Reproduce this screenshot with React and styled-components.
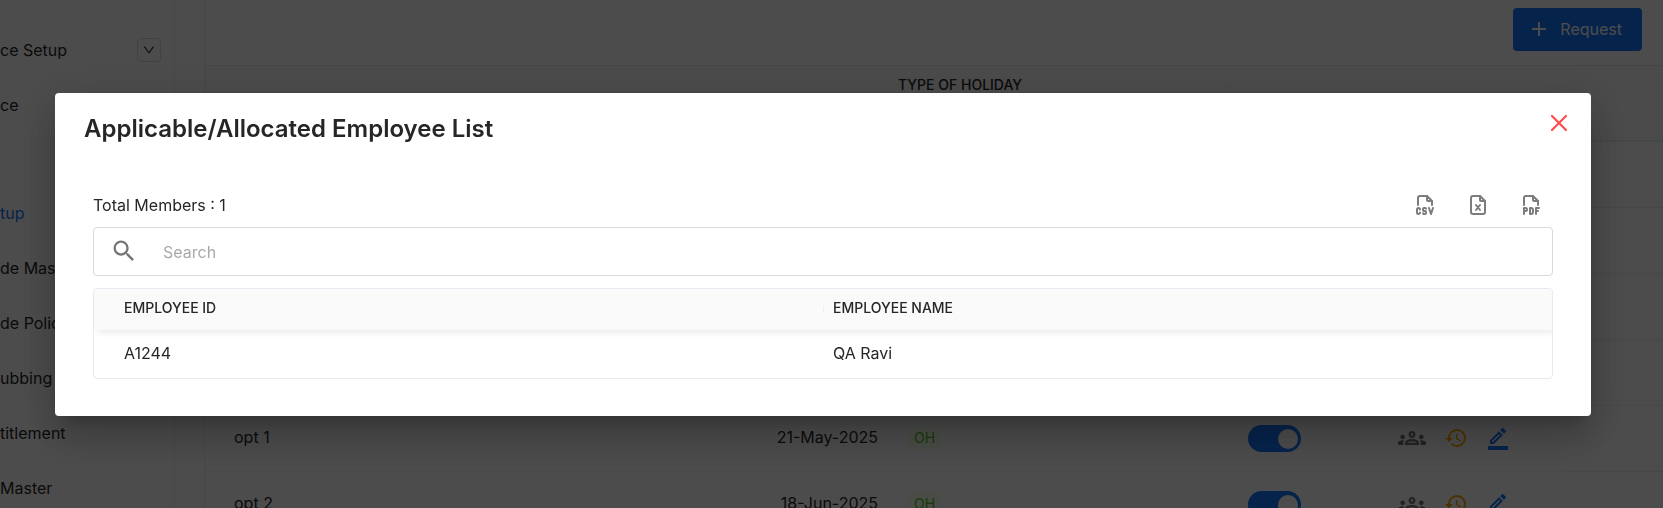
import React, { useState } from "react";
import styled, { createGlobalStyle } from "styled-components";
import {
  MdHistory,
  MdOutlineBorderColor,
  MdOutlineGroups,
  MdSearch,
} from "react-icons/md";
import { TbFileTypeCsv, TbFileTypePdf } from "react-icons/tb";
import { AiOutlineDown } from "react-icons/ai";

const GlobalStyle = createGlobalStyle`
  * {
    box-sizing: border-box;
  }
  body {
    margin: 0;
    overflow: hidden;
    background: #ffffff;
    color: #262626;
    font-family: Inter, "Liberation Sans", sans-serif;
    font-size: 16px;
    line-height: 24px;
  }
  button, input {
    font: inherit;
    color: inherit;
  }
`;

const Page = styled.div`
  display: flex;
  height: 100vh;
  overflow: hidden;
`;

const Sidebar = styled.nav`
  flex: 0 0 175px;
  padding-top: 22px;
  border-right: 1px solid #f0f0f0;
`;
const NavItem = styled.div`
  display: flex;
  align-items: center;
  justify-content: space-between;
  height: ${({ $empty }) => ($empty ? "53px" : "55px")};
  padding-right: 13px;
  white-space: nowrap;
`;
const NavLink = styled.a`
  color: ${({ $active }) => ($active ? "#1677ff" : "#262626")};
  text-decoration: none;
`;
const ExpandButton = styled.button`
  display: flex;
  align-items: center;
  justify-content: center;
  width: 24px;
  height: 24px;
  padding: 0;
  border: 1px solid #d9d9d9;
  border-radius: 4px;
  background: transparent;
`;

const Main = styled.main`
  flex: 1;
  min-width: 0;
  margin-left: 29px;
  border-left: 1px solid #e6ebf1;
`;
const Toolbar = styled.div`
  display: flex;
  justify-content: flex-end;
  height: 66px;
  padding: 8px 21px 0 0;
  border-bottom: 1px solid #e6ebf1;
`;
const RequestButton = styled.button`
  display: flex;
  align-items: center;
  gap: 14px;
  height: 43px;
  padding: 0 20px 2px 19px;
  border: 0;
  border-radius: 4px;
  background: #1677ff;
  color: #ffffff;
`;

const HolidayTable = styled.table`
  width: 100%;
  border-collapse: separate;
  border-spacing: 0;
  table-layout: fixed;
`;
const HolidayHead = styled.th`
  height: 76px;
  padding: 8px 16px;
  border-bottom: 2px solid #e6ebf1;
  background: ${({ $divider }) =>
      $divider ? "linear-gradient(#f0f0f0, #f0f0f0) left center / 1px 38px no-repeat" : "none"}
    #fafafa;
  font-size: 14px;
  font-weight: 500;
  line-height: 22px;
  text-align: left;
  vertical-align: top;
`;
const HolidayCell = styled.td`
  height: 66px;
  padding: ${({ $pad }) => $pad || "0 16px 2px"};
  border-bottom: 1px solid #f0f0f0;
  text-align: ${({ $align }) => $align || "left"};
`;
const Tag = styled.span`
  display: inline-block;
  margin-left: 10px;
  padding: 0 6px;
  border-radius: 4px;
  background: #f6ffed;
  color: #52c41a;
  font-size: 14px;
`;
const Switch = styled.input`
  display: flex;
  align-items: center;
  justify-content: flex-end;
  width: 53px;
  height: 27px;
  margin: 0;
  padding: 3px;
  appearance: none;
  border-radius: 14px;
  background: #1677ff;
  &::before {
    content: "";
    width: 20px;
    height: 20px;
    border-radius: 50%;
    background: #ffffff;
  }
`;
const RowActions = styled.div`
  display: flex;
  align-items: center;
  gap: 18px;
`;
const IconButton = styled.button`
  display: flex;
  padding: 0;
  border: 0;
  background: transparent;
  color: ${({ $color }) => $color};
`;

const Backdrop = styled.div`
  position: fixed;
  inset: 0;
  display: flex;
  align-items: center;
  padding: 0 72px 0 55px;
  background: rgba(0, 0, 0, 0.7);
`;
const Dialog = styled.section`
  flex: 1;
  min-width: 0;
  border-radius: 4px;
  background: #ffffff;
  box-shadow: 0 11px 15px -7px rgba(0, 0, 0, 0.2),
    0 24px 38px 3px rgba(0, 0, 0, 0.14), 0 9px 46px 8px rgba(0, 0, 0, 0.12);
`;
const DialogHeader = styled.header`
  display: flex;
  align-items: center;
  justify-content: space-between;
  padding: 18px 20px 0 29px;
`;
const Title = styled.h2`
  margin: 0;
  font-size: 24px;
  font-weight: 600;
  line-height: 36px;
`;
const CloseButton = styled.button`
  display: flex;
  align-self: flex-start;
  padding: 3px;
  border: 0;
  background: transparent;
`;
const DialogBody = styled.div`
  padding: 36px 38px 37px;
`;
const Summary = styled.div`
  display: flex;
  align-items: center;
  justify-content: space-between;
  height: 44px;
`;
const Exports = styled.div`
  display: flex;
  gap: 9px;
`;
const ExportButton = styled.button`
  display: flex;
  padding: 10px;
  border: 0;
  background: transparent;
  color: #7c7c7c;
`;
const SearchBox = styled.label`
  display: flex;
  align-items: center;
  gap: 25px;
  height: 49px;
  padding: 0 16px;
  border: 1px solid #d9d9d9;
  border-radius: 4px;
  color: #757575;
`;
const SearchInput = styled.input`
  flex: 1;
  min-width: 0;
  padding: 2px 0 0;
  border: 0;
  outline: 0;
  background: transparent;
  color: #262626;
  &::placeholder {
    color: #a9a9a9;
    opacity: 1;
  }
`;
const TableFrame = styled.div`
  margin-top: 12px;
  border: 1px solid #e6ebf1;
  border-radius: 4px;
  overflow: hidden;
`;
const EmployeeTable = styled.table`
  width: 100%;
  border-collapse: separate;
  border-spacing: 0;
  table-layout: fixed;
`;
const EmployeeHead = styled.thead`
  box-shadow: 4px 3px 6px rgba(0, 0, 0, 0.08);
`;
const HeadCell = styled.th`
  height: 41px;
  padding: 0 0 2px 10px;
  background: linear-gradient(#f0f0f0, #f0f0f0) left center / 1px 6px no-repeat
    #fafafa;
  font-size: 14px;
  font-weight: 500;
  text-align: left;
  &:first-child {
    padding-left: 30px;
    background: #fafafa;
  }
`;
const BodyCell = styled.td`
  height: 48px;
  padding: 0 0 2px 10px;
  &:first-child {
    padding-left: 30px;
  }
`;

const navItems = [
  { label: "ce Setup", expandable: true },
  { label: "ce" },
  { label: "" },
  { label: "tup", active: true },
  { label: "de Master" },
  { label: "de Policy" },
  { label: "ubbing" },
  { label: "titlement" },
  { label: "Master" },
];

const holidays = [
  {},
  {},
  {},
  {},
  { name: "opt 1", date: "21-May-2025", type: "OH" },
  { name: "opt 2", date: "18-Jun-2025", type: "OH" },
];

const employees = [{ id: "A1244", name: "QA Ravi" }];

const PlusIcon = () => (
  <svg width="14" height="14" viewBox="0 0 14 14" stroke="currentColor" strokeWidth="2">
    <path d="M7 0v14M0 7h14" />
  </svg>
);

const CloseIcon = () => (
  <svg
    width="18"
    height="18"
    viewBox="0 0 18 18"
    fill="none"
    stroke="#ff4d4f"
    strokeWidth="2.2"
    strokeLinecap="round"
  >
    <path d="M2 2l14 14M16 2L2 16" />
  </svg>
);

const ExcelIcon = () => (
  <svg
    width="24"
    height="24"
    viewBox="0 0 24 24"
    fill="none"
    stroke="currentColor"
    strokeWidth="2"
    strokeLinecap="round"
    strokeLinejoin="round"
  >
    <path d="M14 3v4a1 1 0 0 0 1 1h4" />
    <path d="M17 21H7a2 2 0 0 1-2-2V5a2 2 0 0 1 2-2h7l5 5v11a2 2 0 0 1-2 2z" />
    <path d="M10 12l4 5M14 12l-4 5" />
  </svg>
);

const HolidayRow = ({ holiday }) => {
  const [enabled, setEnabled] = useState(true);

  return (
    <tr>
      <HolidayCell $pad="0 16px 4px 29px">{holiday.name}</HolidayCell>
      <HolidayCell $pad="0 4px 4px 0" $align="right">
        {holiday.date}
      </HolidayCell>
      <HolidayCell>{holiday.type && <Tag>{holiday.type}</Tag>}</HolidayCell>
      <HolidayCell $pad="0 19px">
        {holiday.name && (
          <Switch
            type="checkbox"
            aria-label={holiday.name}
            checked={enabled}
            onChange={() => setEnabled(!enabled)}
          />
        )}
      </HolidayCell>
      <HolidayCell $pad="0 19px 2px">
        {holiday.name && (
          <RowActions>
            <IconButton $color="#757575" aria-label="Employees">
              <MdOutlineGroups size={28} />
            </IconButton>
            <IconButton $color="#ffa500" aria-label="History">
              <MdHistory size={24} />
            </IconButton>
            <IconButton $color="#1677ff" aria-label="Edit">
              <MdOutlineBorderColor size={24} />
            </IconButton>
          </RowActions>
        )}
      </HolidayCell>
    </tr>
  );
};

const App = () => {
  const [search, setSearch] = useState("");
  const [open, setOpen] = useState(true);

  const members = employees.filter((employee) =>
    employee.name.toLowerCase().includes(search.toLowerCase())
  );

  return (
    <>
      <GlobalStyle />
      <Page>
        <Sidebar>
          {navItems.map((item, index) => (
            <NavItem key={index} $empty={!item.label}>
              {item.label && (
                <NavLink href="#" $active={item.active}>
                  {item.label}
                </NavLink>
              )}
              {item.expandable && (
                <ExpandButton aria-label="Expand">
                  <AiOutlineDown size={14} />
                </ExpandButton>
              )}
            </NavItem>
          ))}
        </Sidebar>
        <Main>
          <Toolbar>
            <RequestButton>
              <PlusIcon />
              Request
            </RequestButton>
          </Toolbar>
          <HolidayTable>
            <colgroup>
              <col />
              <col width="200" />
              <col width="347" />
              <col width="150" />
              <col width="284" />
            </colgroup>
            <thead>
              <tr>
                <HolidayHead />
                <HolidayHead />
                <HolidayHead>TYPE OF HOLIDAY</HolidayHead>
                <HolidayHead $divider />
                <HolidayHead />
              </tr>
            </thead>
            <tbody>
              {holidays.map((holiday, index) => (
                <HolidayRow key={index} holiday={holiday} />
              ))}
            </tbody>
          </HolidayTable>
        </Main>
      </Page>
      {open && (
        <Backdrop>
          <Dialog role="dialog" aria-labelledby="dialog-title">
            <DialogHeader>
              <Title id="dialog-title">Applicable/Allocated Employee List</Title>
              <CloseButton aria-label="Close" onClick={() => setOpen(false)}>
                <CloseIcon />
              </CloseButton>
            </DialogHeader>
            <DialogBody>
              <Summary>
                <span>Total Members : {employees.length}</span>
                <Exports>
                  <ExportButton aria-label="Export CSV">
                    <TbFileTypeCsv size={24} />
                  </ExportButton>
                  <ExportButton aria-label="Export Excel">
                    <ExcelIcon />
                  </ExportButton>
                  <ExportButton aria-label="Export PDF">
                    <TbFileTypePdf size={24} />
                  </ExportButton>
                </Exports>
              </Summary>
              <SearchBox>
                <MdSearch size={28} />
                <SearchInput
                  placeholder="Search"
                  aria-label="Search"
                  value={search}
                  onChange={(e) => setSearch(e.target.value)}
                />
              </SearchBox>
              <TableFrame>
                <EmployeeTable>
                  <EmployeeHead>
                    <tr>
                      <HeadCell>EMPLOYEE ID</HeadCell>
                      <HeadCell>EMPLOYEE NAME</HeadCell>
                    </tr>
                  </EmployeeHead>
                  <tbody>
                    {members.map((employee) => (
                      <tr key={employee.id}>
                        <BodyCell>{employee.id}</BodyCell>
                        <BodyCell>{employee.name}</BodyCell>
                      </tr>
                    ))}
                  </tbody>
                </EmployeeTable>
              </TableFrame>
            </DialogBody>
          </Dialog>
        </Backdrop>
      )}
    </>
  );
};

export default App;
